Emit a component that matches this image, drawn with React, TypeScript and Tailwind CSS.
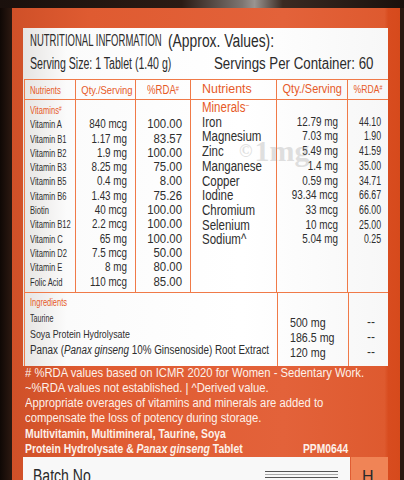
const sans = "font-['Liberation_Sans',Arial,sans-serif]";
const line = "border-[#f07a48]";

const vitamins = [
  ["Vitamin A", "840 mcg", "100.00"],
  ["Vitamin B1", "1.17 mg", "83.57"],
  ["Vitamin B2", "1.9 mg", "100.00"],
  ["Vitamin B3", "8.25 mg", "75.00"],
  ["Vitamin B5", "0.4 mg", "8.00"],
  ["Vitamin B6", "1.43 mg", "75.26"],
  ["Biotin", "40 mcg", "100.00"],
  ["Vitamin B12", "2.2 mcg", "100.00"],
  ["Vitamin C", "65 mg", "100.00"],
  ["Vitamin D2", "7.5 mcg", "50.00"],
  ["Vitamin E", "8 mg", "80.00"],
  ["Folic Acid", "110 mcg", "85.00"],
];

const minerals = [
  ["Iron", "12.79 mg", "44.10"],
  ["Magnesium", "7.03 mg", "1.90"],
  ["Zinc", "5.49 mg", "41.59"],
  ["Manganese", "1.4 mg", "35.00"],
  ["Copper", "0.59 mg", "34.71"],
  ["Iodine", "93.34 mcg", "66.67"],
  ["Chromium", "33 mcg", "66.00"],
  ["Selenium", "10 mcg", "25.00"],
  ["Sodium^", "5.04 mg", "0.25"],
];

export default function App() {
  return (
    <div className={`w-[404px] h-[480px] overflow-hidden flex flex-col bg-[#1b110c] ${sans}`}>
      <div className="h-[8px] shrink-0 bg-[linear-gradient(90deg,#1a100c_0%,#2b1b14_45%,#7d7672_60%,#9a9490_63%,#3a2a22_70%,#1a100c_100%)]" />
      <div className="flex flex-1">
        <div className="w-[12px] shrink-0 bg-[linear-gradient(90deg,#0f0805,#2d1911)]" />
        <div className="w-[388px] shrink-0 flex flex-col pl-[11px] pr-[12px] pt-[20px] bg-[linear-gradient(90deg,#cf5028_0%,#df5b31_20%,#e3623a_70%,#de5a2f_96%,#d84c1f_97%,#d64a1c_100%)]">
          {/* label panel */}
          <div className="relative h-[338px] shrink-0 flex flex-col bg-[linear-gradient(90deg,#e6e4e2_0%,#fbfbfb_12%,#ffffff_60%,#f7f7f7_100%)]">
            <div className="pl-[7px] pt-[4px] h-[51px] text-[#2b2b2b] whitespace-nowrap">
              <div className="h-[18px] leading-[18px] flex">
                <div className="w-[138px] text-[17px]">
                  <div className="origin-left scale-x-[0.56]">NUTRITIONAL INFORMATION</div>
                </div>
                <div className="text-[18px]">
                  <div className="origin-left scale-x-[0.77]">(Approx. Values):</div>
                </div>
              </div>
              <div className="mt-[5px] h-[18px] leading-[18px] flex text-[16px]">
                <div className="w-[184px]">
                  <div className="origin-left scale-x-[0.66]">Serving Size: 1 Tablet (1.40 g)</div>
                </div>
                <div>
                  <div className="origin-left scale-x-[0.83]">Servings Per Container: 60</div>
                </div>
              </div>
            </div>

            {/* table */}
            <div className={`ml-[1px] flex-1 flex flex-col border-l border-t ${line}`}>
              <div className={`flex h-[20px] border-b ${line} text-[#e65a28] whitespace-nowrap`}>
                <div className={`w-[51px] border-r ${line} pl-[5px] text-[11px] leading-[20px]`}>
                  <div className="origin-left scale-x-[0.7]">Nutrients</div>
                </div>
                <div className={`w-[60px] border-r ${line} text-center text-[11.5px] leading-[20px]`}>
                  <div className="scale-x-[0.82]">Qty./Serving</div>
                </div>
                <div className={`w-[55px] border-r ${line} text-center text-[12px] leading-[20px]`}>
                  <div className="scale-x-[0.8]">%RDA<sup className="text-[7px]">#</sup></div>
                </div>
                <div className={`w-[86px] border-r ${line} pl-[11px] text-[13.5px] leading-[18px]`}>
                  <div className="origin-left scale-x-[0.92]">Nutrients</div>
                </div>
                <div className={`w-[71px] border-r ${line} text-center text-[13px] leading-[18px]`}>
                  <div className="scale-x-[0.84]">Qty./Serving</div>
                </div>
                <div className="flex-1 text-center text-[11.5px] leading-[18px]">
                  <div className="scale-x-[0.75]">%RDA<sup className="text-[7px]">#</sup></div>
                </div>
              </div>
              <div className={`flex h-[193px] border-b ${line} text-[#2e2e2e] whitespace-nowrap`}>
                <div className={`w-[51px] border-r ${line} pl-[5px] pt-[3px] text-[11.5px] leading-[14.3px]`}>
                  <div className="origin-left scale-x-[0.66]">
                    <div className="text-[#e65a28]">Vitamins<sup className="text-[7px]">#</sup></div>
                    {vitamins.map((v) => (
                      <div key={v[0]}>{v[0]}</div>
                    ))}
                  </div>
                </div>
                <div className={`w-[60px] border-r ${line} pr-[8px] pt-[3px] text-right text-[12px] leading-[14.3px]`}>
                  <div className="origin-right scale-x-[0.82]">
                    <div>&nbsp;</div>
                    {vitamins.map((v) => (
                      <div key={v[0]}>{v[1]}</div>
                    ))}
                  </div>
                </div>
                <div className={`w-[55px] border-r ${line} pr-[8px] pt-[3px] text-right text-[12px] leading-[14.3px]`}>
                  <div className="origin-right scale-x-[0.95]">
                    <div>&nbsp;</div>
                    {vitamins.map((v) => (
                      <div key={v[0]}>{v[2]}</div>
                    ))}
                  </div>
                </div>
                <div className={`w-[86px] border-r ${line} pl-[11px] text-[14px] leading-[14.7px]`}>
                  <div className="origin-left scale-x-[0.82]">
                    <div className="text-[#e65a28]">Minerals<sup className="text-[8px]">~</sup></div>
                    {minerals.map((m) => (
                      <div key={m[0]}>{m[0]}</div>
                    ))}
                  </div>
                </div>
                <div className={`w-[71px] border-r ${line} pr-[9px] text-right text-[13px] leading-[14.7px]`}>
                  <div className="origin-right scale-x-[0.76]">
                    <div>&nbsp;</div>
                    {minerals.map((m) => (
                      <div key={m[0]}>{m[1]}</div>
                    ))}
                  </div>
                </div>
                <div className="flex-1 pr-[7px] text-right text-[12px] leading-[14.7px]">
                  <div className="origin-right scale-x-[0.73]">
                    <div>&nbsp;</div>
                    {minerals.map((m) => (
                      <div key={m[0]}>{m[2]}</div>
                    ))}
                  </div>
                </div>
              </div>
              <div className="flex flex-1 text-[#2e2e2e] whitespace-nowrap">
                <div className={`w-[253px] border-r ${line} pl-[5px] pt-[1px] text-[12px] leading-[16px]`}>
                  <div className="origin-left scale-x-[0.68] text-[#e65a28] text-[11px]">Ingredients</div>
                  <div className="origin-left scale-x-[0.62] text-[11.5px]">Taurine</div>
                  <div className="origin-left scale-x-[0.77] text-[11.5px]">Soya Protein Hydrolysate</div>
                  <div className="origin-left scale-x-[0.82]">
                    Panax (<i>Panax ginseng</i> 10% Ginsenoside) Root Extract
                  </div>
                </div>
                <div className={`w-[71px] border-r ${line} pl-[12px] pt-[22px] text-[13px] leading-[15px]`}>
                  <div className="origin-left scale-x-[0.82]">
                    <div>500 mg</div>
                    <div>186.5 mg</div>
                    <div>120 mg</div>
                  </div>
                </div>
                <div className="flex-1 pl-[18px] pt-[22px] text-[12px] leading-[15px]">
                  <div>--</div>
                  <div>--</div>
                  <div>--</div>
                </div>
              </div>
            </div>

            {/* watermark */}
            <div className="absolute left-[216px] top-[108px] flex items-center gap-[2px] text-[#9a9a9a] opacity-30 font-['Liberation_Serif',serif] font-bold pointer-events-none">
              <span className="text-[18px]">©</span>
              <span className="text-[30px] leading-[30px]">1mg</span>
            </div>
          </div>

          {/* footer copy */}
          <div className="pl-[2px] text-[#fdf1ea] text-[12.5px] leading-[15px] whitespace-nowrap">
            <div className="origin-left scale-x-[0.9]">
              <div># %RDA values based on ICMR 2020 for Women - Sedentary Work.</div>
              <div>~%RDA values not established. | ^Derived value.</div>
              <div>Appropriate overages of vitamins and minerals are added to</div>
              <div>compensate the loss of potency during storage.</div>
            </div>
            <div className="font-bold text-[13px]">
              <div className="origin-left scale-x-[0.8]">Multivitamin, Multimineral, Taurine, Soya</div>
              <div className="flex">
                <div className="w-[278px]">
                  <div className="origin-left scale-x-[0.8]">
                    Protein Hydrolysate &amp; <i>Panax ginseng</i> Tablet
                  </div>
                </div>
                <div className="origin-left scale-x-[0.79]">PPM0644</div>
              </div>
            </div>
          </div>

          {/* batch strip */}
          <div className="flex flex-1 mt-[1px]">
            <div className="w-[327px] bg-[#f8f8f8] flex items-start pl-[10px] pt-[10px] text-[#2a2a2a]">
              <span className="text-[18px] leading-[18px]">
                <span className="inline-block origin-left scale-x-[0.78]">Batch No</span>
              </span>
              <div className="ml-auto mr-[12px] mt-[4px] w-[73px] flex flex-col gap-[2px]">
                <div className="h-[1px] bg-[#555]" />
                <div className="h-[1px] bg-[#aaa]" />
                <div className="h-[1px] bg-[#555]" />
              </div>
            </div>
            <div className="flex-1 ml-[1px] bg-[#f08456] pl-[11px] pt-[12px] text-[#2a2a2a] text-[16px] leading-[16px]">H</div>
          </div>
        </div>
        <div className="flex-1 bg-[#2a1810]" />
      </div>
    </div>
  );
}
